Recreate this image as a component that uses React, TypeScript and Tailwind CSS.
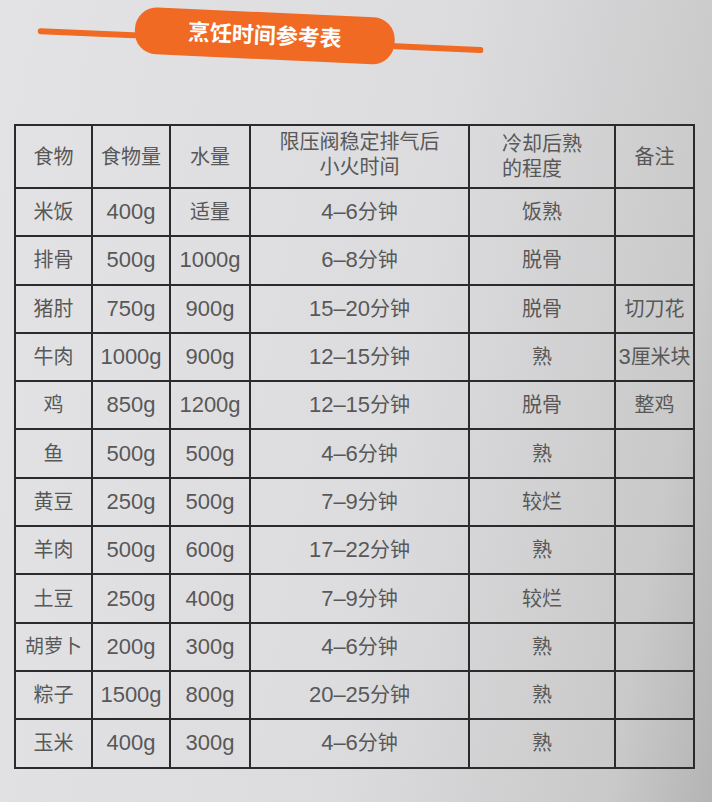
const rows: [string, string, string, string, string, string][] = [
  ["米饭", "400g", "适量", "4-6分钟", "饭熟", ""],
  ["排骨", "500g", "1000g", "6-8分钟", "脱骨", ""],
  ["猪肘", "750g", "900g", "15-20分钟", "脱骨", "切刀花"],
  ["牛肉", "1000g", "900g", "12-15分钟", "熟", "3厘米块"],
  ["鸡", "850g", "1200g", "12-15分钟", "脱骨", "整鸡"],
  ["鱼", "500g", "500g", "4-6分钟", "熟", ""],
  ["黄豆", "250g", "500g", "7-9分钟", "较烂", ""],
  ["羊肉", "500g", "600g", "17-22分钟", "熟", ""],
  ["土豆", "250g", "400g", "7-9分钟", "较烂", ""],
  ["胡萝卜", "200g", "300g", "4-6分钟", "熟", ""],
  ["粽子", "1500g", "800g", "20-25分钟", "熟", ""],
  ["玉米", "400g", "300g", "4-6分钟", "熟", ""],
];

const cell = "border-2 border-[#2b2b2b] text-center align-middle";

// latin digits print a bit larger than the CJK glyphs in the source
function Mixed({ text }: { text: string }) {
  const parts = text.split(/([0-9a-z\-]+)/);
  return (
    <>
      {parts.map((p, i) =>
        /^[0-9a-z\-]+$/.test(p) ? (
          <span key={i} className="text-[22px]">
            {p.replace("-", "–")}
          </span>
        ) : (
          p
        )
      )}
    </>
  );
}

export default function App() {
  return (
    <div
      className="w-[712px] h-[802px] overflow-hidden bg-[linear-gradient(100deg,#e3e3e5_0%,#dcdcde_55%,#c9c9ca_88%,#b4b4b4_100%)] text-[#585858]"
      style={{ fontFamily: '"Liberation Sans", "Noto Sans CJK SC", sans-serif' }}
    >
      {/* title banner */}
      <div className="h-[124px] pt-[2px]">
        <div className="flex items-center ml-[38px] w-[446px] rotate-[2.6deg] origin-left">
          <div className="h-[6px] w-[99px] rounded-full bg-[#f06a24] translate-y-[5px]" />
          <div className="w-[260px] h-[47px] -mx-[2px] rounded-[22px] bg-[#f06a24] flex items-center justify-center">
            <span className="text-white text-[22px] font-bold leading-none">烹饪时间参考表</span>
          </div>
          <div className="h-[6px] w-[91px] rounded-full bg-[#f06a24] translate-y-[4px]" />
        </div>
      </div>

      <table className="ml-[14px] border-collapse text-[20px] leading-[26px]">
        <colgroup>
          <col className="w-[77px]" />
          <col className="w-[78px]" />
          <col className="w-[80px]" />
          <col className="w-[219px]" />
          <col className="w-[146px]" />
          <col className="w-[79px]" />
        </colgroup>
        <thead>
          <tr className="h-[63px]">
            <th className={`${cell} font-normal`}>食物</th>
            <th className={`${cell} font-normal`}>食物量</th>
            <th className={`${cell} font-normal`}>水量</th>
            <th className={`${cell} font-normal`}>
              <div className="leading-[25px] -mt-[4px]">
                限压阀稳定排气后
                <br />
                小火时间
              </div>
            </th>
            <th className={`${cell} font-normal`}>
              <div className="inline-block text-left leading-[25px]">
                冷却后熟
                <br />
                的程度
              </div>
            </th>
            <th className={`${cell} font-normal`}>备注</th>
          </tr>
        </thead>
        <tbody>
          {rows.map((r) => (
            <tr key={r[0]} className="h-[48.3px]">
              {r.map((v, i) => (
                <td key={i} className={`${cell} ${i === 0 && r[0] === "胡萝卜" ? "text-[19px]" : ""}`}>
                  <Mixed text={v} />
                </td>
              ))}
            </tr>
          ))}
        </tbody>
      </table>
    </div>
  );
}
